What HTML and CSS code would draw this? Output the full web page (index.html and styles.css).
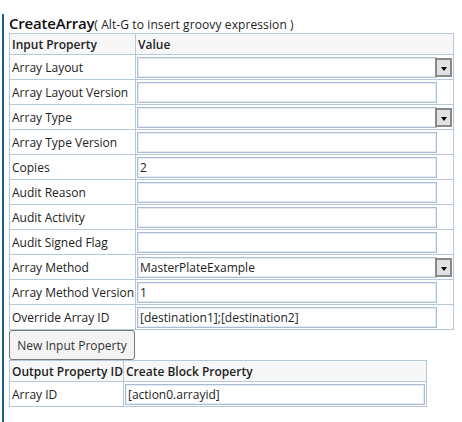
FILE: index.html
```html
<!DOCTYPE html>
<html>
<head>
<meta charset="utf-8">
<link rel="stylesheet" href="styles.css">
</head>
<body>
<div class="block">
  <div class="title"><span class="name">CreateArray</span><span class="hint">( Alt-G to insert groovy expression )</span></div>
  <table class="props in-props">
    <colgroup><col class="c1"><col class="c2"></colgroup>
    <tr class="head"><th>Input Property</th><th>Value</th></tr>
    <tr><td>Array Layout</td><td><div class="sel"><div class="sel-box"></div><div class="sel-btn"><span class="tri"></span></div></div></td></tr>
    <tr><td>Array Layout Version</td><td><div class="inp"></div></td></tr>
    <tr><td>Array Type</td><td><div class="sel"><div class="sel-box"></div><div class="sel-btn"><span class="tri"></span></div></div></td></tr>
    <tr><td>Array Type Version</td><td><div class="inp"></div></td></tr>
    <tr><td>Copies</td><td><div class="inp">2</div></td></tr>
    <tr><td>Audit Reason</td><td><div class="inp"></div></td></tr>
    <tr><td>Audit Activity</td><td><div class="inp"></div></td></tr>
    <tr><td>Audit Signed Flag</td><td><div class="inp"></div></td></tr>
    <tr><td>Array Method</td><td><div class="sel"><div class="sel-box">MasterPlateExample</div><div class="sel-btn"><span class="tri"></span></div></div></td></tr>
    <tr><td>Array Method Version</td><td><div class="inp">1</div></td></tr>
    <tr><td>Override Array ID</td><td><div class="inp">[destination1];[destination2]</div></td></tr>
  </table>
  <button class="btn">New Input Property</button>
  <table class="props out-props">
    <colgroup><col class="o1"><col class="o2"></colgroup>
    <tr class="head"><th>Output Property ID</th><th>Create Block Property</th></tr>
    <tr><td>Array ID</td><td><div class="inp">[action0.arrayid]</div></td></tr>
  </table>
</div>
</body>
</html>
```
FILE: styles.css
```css
html, body {
  margin: 0;
  padding: 0;
  background: #ffffff;
}
body {
  font-family: "Open Sans", "Noto Sans", sans-serif;
  font-size: 12px;
  color: #222;
}
.block {
  margin: 14px 0 0 2px;
  border-left: 2px solid #1c5f89;
  padding-left: 5px;
  min-height: 420px;
}
.title {
  height: 19px;
  line-height: 19px;
  white-space: nowrap;
}
.name {
  font-size: 15px;
  font-weight: 600;
  letter-spacing: -0.2px;
  color: #111;
}
.hint {
  font-size: 12px;
  letter-spacing: 0.1px;
  color: #222;
}
.props {
  border-collapse: collapse;
  table-layout: fixed;
}
.props th, .props td {
  border: 1px solid #b7c7dc;
  padding: 1px 1px;
  text-align: left;
  white-space: nowrap;
  vertical-align: middle;
}
.props th {
  background: #f7f7f7;
  font-weight: 600;
  height: 18px;
  padding-left: 2px;
}
.props td:first-child {
  padding-left: 2px;
}
.in-props { width: 445px; }
.in-props td { height: 22px; }
.c1 { width: 126px; }
.out-props { width: 418px; }
.out-props td { height: 22px; }
.o1 { width: 114px; }
.inp {
  box-sizing: border-box;
  width: 300px;
  height: 21px;
  border: 1px solid #aabcd6;
  box-shadow: inset 0 0 0 1px #e4ebf3;
  padding: 0 2px;
  line-height: 19px;
  color: #222;
  background: #fff;
}
.sel {
  display: flex;
  align-items: center;
  width: 315px;
}
.sel-box {
  box-sizing: border-box;
  width: 300px;
  height: 21px;
  border: 1px solid #aabcd6;
  box-shadow: inset 0 0 0 1px #e4ebf3;
  padding: 0 2px;
  line-height: 19px;
}
.sel-btn {
  box-sizing: border-box;
  width: 17px;
  height: 19px;
  margin-left: -2px;
  border: 2px solid #8a8a8a;
  background: #e2e2e2;
  display: flex;
  align-items: center;
  justify-content: center;
  padding-top: 3px;
}
.tri {
  width: 0;
  height: 0;
  border-left: 3px solid transparent;
  border-right: 3px solid transparent;
  border-top: 4px solid #000;
}
.btn {
  display: block;
  margin: 0;
  height: 30px;
  width: 126px;
  font-family: "Open Sans", "Noto Sans", sans-serif;
  font-size: 12px;
  color: #333;
  background: #f3f3f3;
  border: 1px solid #777;
  border-radius: 3px;
  padding: 0;
}
```
